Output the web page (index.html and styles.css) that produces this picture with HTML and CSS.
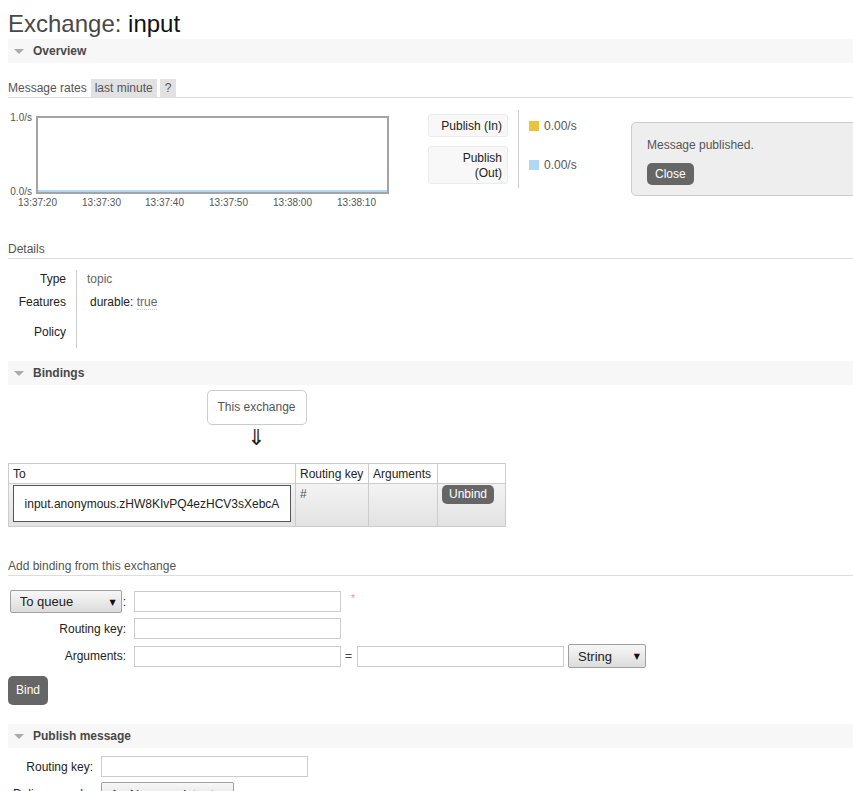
FILE: index.html
```html
<!DOCTYPE html>
<html>
<head>
<meta charset="utf-8">
<title>Exchange: input</title>
<link rel="stylesheet" href="styles.css">
</head>
<body>
<h1>Exchange: <b>input</b></h1>

<div class="section">
  <h2 class="bar"><span class="tri"></span>Overview</h2>
  <div class="rates-head">
    <span class="rates-title">Message rates</span>
    <span class="tag">last minute</span>
    <span class="tag">?</span>
  </div>
  <div class="rates">
    <div class="chart">
      <span class="ylab ytop">1.0/s</span>
      <span class="ylab ybot">0.0/s</span>
      <div class="plot"><div class="series"></div></div>
      <span class="xlab" style="left:29.5px">13:37:20</span>
      <span class="xlab" style="left:93.5px">13:37:30</span>
      <span class="xlab" style="left:156.5px">13:37:40</span>
      <span class="xlab" style="left:220.5px">13:37:50</span>
      <span class="xlab" style="left:284.5px">13:38:00</span>
      <span class="xlab" style="left:348.5px">13:38:10</span>
    </div>
    <div class="legend">
      <div class="lbox">Publish (In)</div>
      <div class="lval"><span class="sw yellow"></span>0.00/s</div>
      <div class="lbox">Publish (Out)</div>
      <div class="lval"><span class="sw blue"></span>0.00/s</div>
    </div>
  </div>

  <h3 class="sub">Details</h3>
  <table class="facts">
    <tr class="r1"><th>Type</th><td><span class="muted">topic</span></td></tr>
    <tr class="r2"><th>Features</th><td><span class="feat">durable: <abbr class="muted">true</abbr></span></td></tr>
    <tr class="r3"><th>Policy</th><td></td></tr>
  </table>
</div>

<div class="section">
  <h2 class="bar"><span class="tri"></span>Bindings</h2>
  <div class="flow">
    <div class="this-ex">This exchange</div>
    <div class="arrow">&#8659;</div>
  </div>
  <table class="bindings">
    <colgroup>
      <col class="w-to"><col class="w-rk"><col class="w-args"><col class="w-act">
    </colgroup>
    <thead>
      <tr><th>To</th><th>Routing key</th><th>Arguments</th><th></th></tr>
    </thead>
    <tbody>
      <tr>
        <td><div class="qbox">input.anonymous.zHW8KIvPQ4ezHCV3sXebcA</div></td>
        <td class="c-rk">#</td>
        <td></td>
        <td><button class="btn small">Unbind</button></td>
      </tr>
    </tbody>
  </table>

  <h3 class="sub sub2">Add binding from this exchange</h3>
  <div class="form bind-form">
    <div class="lab"><span class="sel sel-q"><select><option>To queue</option></select></span>:</div>
    <div class="field"><input type="text"><span class="req">*</span></div>
    <div class="lab">Routing key:</div>
    <div class="field"><input type="text"></div>
    <div class="lab">Arguments:</div>
    <div class="field"><input type="text"><span class="eq">=</span><input type="text"><span class="sel sel-s"><select><option>String</option></select></span></div>
  </div>
  <button class="btn big">Bind</button>
</div>

<div class="section">
  <h2 class="bar bar3"><span class="tri"></span>Publish message</h2>
  <div class="form pub-form">
    <div class="lab">Routing key:</div>
    <div class="field"><input type="text"></div>
    <div class="lab">Delivery mode:</div>
    <div class="field"><span class="sel sel-d"><select><option>1 - Non-persistent</option></select></span></div>
  </div>
</div>

<div class="popup">
  <p>Message published.</p>
  <button class="btn close">Close</button>
</div>
</body>
</html>
```

FILE: styles.css
```css
html, body {
  margin: 0;
  padding: 0;
}
body {
  padding-left: 8px;
  font-family: "Liberation Sans", Arial, sans-serif;
  font-size: 12px;
  color: #444;
  background: #fff;
  overflow: hidden;
}
h1 {
  margin: 10px 0 0 0;
  font-size: 24px;
  line-height: 28px;
  font-weight: normal;
  color: #484848;
}
h1 b {
  font-weight: normal;
  color: #111;
}
.bar {
  margin: 1px 0 0 0;
  height: 24px;
  background: #f7f7f7;
  font-size: 12px;
  font-weight: bold;
  color: #484848;
  display: flex;
  align-items: center;
  padding-left: 6px;
}
.tri {
  width: 0;
  height: 0;
  border-left: 5px solid transparent;
  border-right: 5px solid transparent;
  border-top: 5px solid #aaa;
  margin-right: 9px;
}
.rates-head {
  margin-top: 16px;
  display: flex;
  align-items: center;
  height: 18px;
  line-height: 18px;
  border-bottom: 1px solid #ddd;
}
.rates-title {
  margin-right: 4px;
  color: #555;
}
.tag {
  background: #e2e2e2;
  color: #555;
  padding: 0 4px;
  margin-right: 3px;
}
.tag + .tag {
  padding: 0 5px;
}
.rates {
  margin-top: 12px;
  display: flex;
}
.chart {
  position: relative;
  width: 392px;
  height: 98px;
  font-size: 10px;
  line-height: 11px;
  color: #555;
}
.ylab {
  position: absolute;
  right: 368px;
}
.ytop { top: 2px; }
.ybot { top: 76px; }
.xlab {
  position: absolute;
  top: 87px;
  transform: translateX(-50%);
}
.plot {
  position: absolute;
  left: 28px;
  top: 6px;
  width: 353px;
  height: 78px;
  box-sizing: border-box;
  border: 2px solid #a4a4a4;
  display: flex;
  align-items: flex-end;
}
.series {
  width: 100%;
  height: 2px;
  background: #afd8f8;
}
.legend {
  position: relative;
  margin-left: 28px;
  display: grid;
  grid-template-columns: 80px auto;
  column-gap: 21px;
  row-gap: 9px;
  padding: 4px 0;
  align-self: flex-start;
}
.legend::before {
  content: "";
  position: absolute;
  left: 90px;
  top: 0;
  bottom: 0;
  width: 1px;
  background: #ccc;
}
.lbox {
  box-sizing: border-box;
  background: #f8f8f8;
  border: 1px solid #ebebeb;
  border-radius: 3px;
  padding: 4px 5px 2px 5px;
  line-height: 15px;
  text-align: right;
  color: #222;
}
.lval {
  display: flex;
  align-items: center;
  color: #555;
}
.sw {
  display: inline-block;
  width: 10px;
  height: 10px;
  margin-right: 5px;
}
.yellow { background: #edc240; }
.blue { background: #afd8f8; }

.sub {
  margin: 34px 0 0 0;
  font-size: 12px;
  font-weight: normal;
  line-height: 15px;
  padding-bottom: 1px;
  border-bottom: 1px solid #ddd;
  color: #555;
}
.sub2 {
  margin-top: 32px;
}
.facts {
  border-collapse: collapse;
  margin-top: 11px;
}
.facts th {
  width: 58px;
  text-align: right;
  font-weight: normal;
  color: #222;
  padding: 0 10px 0 0;
  border-right: 1px solid #ccc;
}
.facts td {
  padding: 0 0 0 10px;
}
.facts .r1 { height: 17px; }
.facts .r2 { height: 29px; }
.facts .r3 { height: 32px; }
.facts .r1 th, .facts .r1 td { padding-top: 1px; }
.muted {
  color: #666;
}
.feat {
  margin-left: 3px;
  color: #222;
}
abbr.muted {
  text-decoration: none;
  border-bottom: 1px dotted #ccc;
}

.section + .section .bar {
  margin-top: 13px;
}
.flow {
  width: 497px;
  display: flex;
  flex-direction: column;
  align-items: center;
  margin-top: 5px;
}
.this-ex {
  box-sizing: border-box;
  width: 100px;
  height: 35px;
  line-height: 33px;
  border: 1px solid #ccc;
  border-radius: 5px;
  text-align: center;
  color: #555;
}
.arrow {
  font-family: "DejaVu Sans", sans-serif;
  font-size: 22px;
  line-height: 26px;
  color: #222;
  margin-top: 0;
}
.bindings {
  margin-top: 12px;
  border-collapse: collapse;
  width: 497px;
  table-layout: fixed;
}
.w-to { width: 287px; }
.w-rk { width: 73px; }
.w-args { width: 69px; }
.w-act { width: 68px; }
.bindings th, .bindings td {
  border: 1px solid #ccc;
  box-sizing: border-box;
}
.bindings th {
  font-weight: normal;
  text-align: left;
  color: #222;
  height: 20px;
  padding: 0 4px;
}
.bindings tbody tr {
  background: linear-gradient(#f3f3f3, #e2e2e2);
}
.bindings td {
  vertical-align: top;
  padding: 1px 4px 4px 4px;
  height: 43px;
  color: #555;
}
.bindings td.c-rk { padding-top: 3px; }
.qbox {
  box-sizing: border-box;
  height: 37px;
  border: 1px solid #555;
  background: #fff;
  color: #222;
  display: flex;
  align-items: center;
  justify-content: center;
}
.btn {
  font-family: "Liberation Sans", Arial, sans-serif;
  font-size: 12px;
  color: #fff;
  background: #666;
  border: none;
  border-radius: 5px;
  cursor: pointer;
  display: block;
}
.btn.small {
  padding: 2px 7px;
  line-height: 15px;
}
.btn.big {
  margin-top: 8px;
  padding: 7px 8px;
  line-height: 15px;
}
.btn.close {
  padding: 4px 8px;
  line-height: 14px;
}

.form {
  display: grid;
  row-gap: 5px;
  align-items: center;
}
.bind-form {
  margin-top: 14px;
  grid-template-columns: 120px auto;
  column-gap: 6px;
}
.pub-form {
  margin-top: 8px;
  grid-template-columns: 85px auto;
  column-gap: 8px;
}
.lab {
  text-align: right;
  color: #222;
  display: flex;
  justify-content: flex-end;
  align-items: center;
}
.bind-form .lab {
  padding-right: 2px;
}
.field {
  display: flex;
  align-items: center;
}
input[type="text"] {
  box-sizing: border-box;
  width: 207px;
  height: 21px;
  margin: 0;
  border: 1px solid #ccc;
  background: #fff;
  padding: 2px 4px;
  font-family: "Liberation Sans", Arial, sans-serif;
  font-size: 12px;
}
.req {
  color: #f58c8c;
  margin-left: 10px;
  font-size: 10px;
  align-self: flex-start;
  margin-top: 2px;
}
.eq {
  margin: 0 5px 0 4px;
  color: #444;
}
.sel {
  position: relative;
  display: inline-block;
}
.sel select {
  -webkit-appearance: none;
  appearance: none;
  box-sizing: border-box;
  margin: 0;
  font-family: "Liberation Sans", Arial, sans-serif;
  font-size: 13px;
  color: #222;
  background: linear-gradient(#f7f7f7, #dcdcdc);
  border: 1px solid #a0a0a0;
  border-radius: 2px;
  padding: 0 0 0 9px;
  display: block;
}
.sel::after {
  content: "\25BC";
  position: absolute;
  right: 6px;
  top: 50%;
  transform: translateY(-50%);
  font-family: "DejaVu Sans", sans-serif;
  font-size: 8px;
  color: #111;
  pointer-events: none;
}
.sel-q {
  margin-left: 3px;
  margin-right: 1px;
}
.sel-q select {
  width: 112px;
  height: 23px;
}
.sel-s {
  margin-left: 4px;
}
.sel-s select {
  width: 78px;
  height: 24px;
}
.sel-d select {
  width: 133px;
  height: 24px;
}
.section + .section .bar.bar3 {
  margin-top: 19px;
}

.popup {
  position: absolute;
  left: 631px;
  top: 122px;
  width: 260px;
  box-sizing: border-box;
  background: #eee;
  border: 1px solid #ccc;
  border-radius: 5px;
  padding: 15px 15px 10px 15px;
  color: #555;
}
.popup p {
  margin: 0 0 10px 0;
  line-height: 15px;
}
```
